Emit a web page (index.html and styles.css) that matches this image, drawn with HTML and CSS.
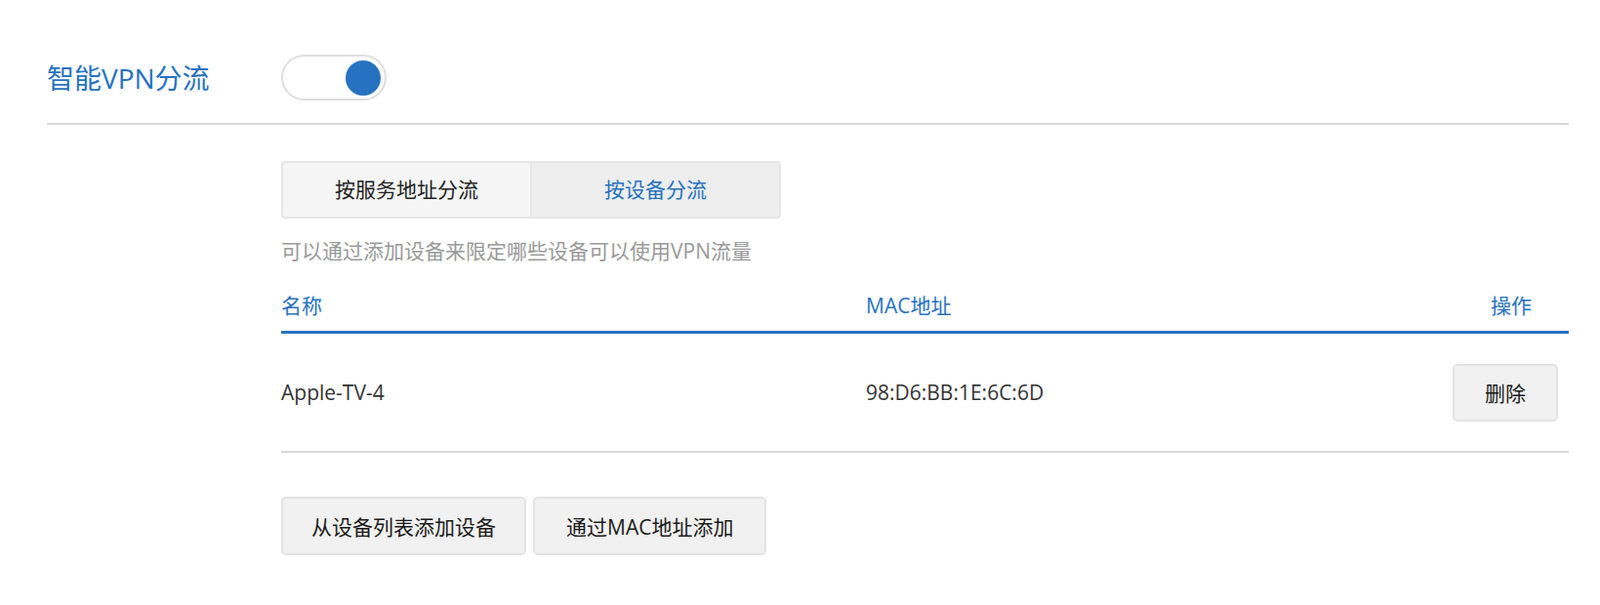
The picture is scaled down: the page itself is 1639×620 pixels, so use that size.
FILE: index.html
```html
<!DOCTYPE html>
<html lang="zh-CN">
<head>
    <meta charset="UTF-8">
    <title>智能VPN分流</title>
    <link rel="stylesheet" href="styles.css">
</head>
<body>
    <div class="container">
        <div class="setting-row">
            <div class="setting-title">智能VPN分流</div>
            <div class="switch on">
                <span class="knob"></span>
            </div>
        </div>

        <div class="setting-body">
            <div class="tabs">
                <div class="tab">按服务地址分流</div>
                <div class="tab active">按设备分流</div>
            </div>

            <p class="hint">可以通过添加设备来限定哪些设备可以使用VPN流量</p>

            <table class="device-table">
                <colgroup>
                    <col class="col-name">
                    <col>
                    <col class="col-action">
                </colgroup>
                <thead>
                    <tr>
                        <th>名称</th>
                        <th>MAC地址</th>
                        <th class="action">操作</th>
                    </tr>
                </thead>
                <tbody>
                    <tr>
                        <td>Apple-TV-4</td>
                        <td>98:D6:BB:1E:6C:6D</td>
                        <td class="action"><button class="btn btn-delete">删除</button></td>
                    </tr>
                </tbody>
            </table>

            <div class="actions">
                <button class="btn">从设备列表添加设备</button>
                <button class="btn btn-mac">通过MAC地址添加</button>
            </div>
        </div>
    </div>
</body>
</html>
```

FILE: styles.css
```css
:root {
    --primary: #2672c0;
    --border: #e3e3e3;
    --line: #d9d9d9;
    --text: #333;
}

body {
    margin: 0;
    background: #fff;
    color: var(--text);
    font-family: "Open Sans", "Noto Sans CJK SC", sans-serif;
    font-size: 21px;
}

.container {
    padding: 0 32px 0 48px;
}

/* Заголовок с переключателем */
.setting-row {
    display: flex;
    align-items: center;
    padding: 56px 0 23px;
    border-bottom: 2px solid var(--line);
}

.setting-title {
    width: 240px;
    font-size: 28px;
    line-height: 40px;
    color: var(--primary);
}

.switch {
    position: relative;
    box-sizing: border-box;
    width: 108px;
    height: 47px;
    border: 2px solid #dedede;
    border-radius: 24px;
    background: #fff;
}

.switch .knob {
    position: absolute;
    top: 4px;
    right: 4px;
    width: 36px;
    height: 36px;
    border-radius: 50%;
    background: var(--primary);
}

.setting-body {
    padding-left: 240px;
}

/* Вкладки */
.tabs {
    display: flex;
    width: 512px;
    margin-top: 37px;
    border: 2px solid #e6e6e6;
    border-radius: 4px;
    box-sizing: border-box;
    overflow: hidden;
}

.tab {
    flex: 1;
    height: 55px;
    line-height: 55px;
    text-align: center;
    background: #f5f5f5;
    color: #222;
}

.tab + .tab {
    border-left: 2px solid #e6e6e6;
}

.tab.active {
    background: #eee;
    color: var(--primary);
}

.hint {
    margin: 21px 0 0;
    line-height: 24px;
    color: #999;
}

/* Таблица устройств */
.device-table {
    width: 100%;
    margin-top: 20px;
    border-collapse: collapse;
    table-layout: fixed;
}

.col-name {
    width: 599px;
}

.col-action {
    width: 130px;
}

.device-table th {
    padding: 12px 0 14px;
    line-height: 24px;
    font-weight: normal;
    text-align: left;
    color: var(--primary);
    border-bottom: 3px solid var(--primary);
}

.device-table th.action {
    padding-left: 12px;
}

.device-table td {
    height: 120px;
    padding: 0;
    line-height: 24px;
    border-bottom: 2px solid var(--line);
}

.device-table .action {
    text-align: center;
}

.btn {
    height: 60px;
    padding: 0 29px;
    font-family: inherit;
    font-size: 21px;
    color: #1a1a1a;
    background: #f1f1f1;
    border: 2px solid var(--border);
    border-radius: 5px;
    cursor: pointer;
}

.btn-mac {
    padding: 0 32px;
}

.btn-delete {
    width: 108px;
    height: 59px;
    padding: 0;
}

.actions {
    display: flex;
    gap: 7px;
    margin-top: 45px;
}
```
